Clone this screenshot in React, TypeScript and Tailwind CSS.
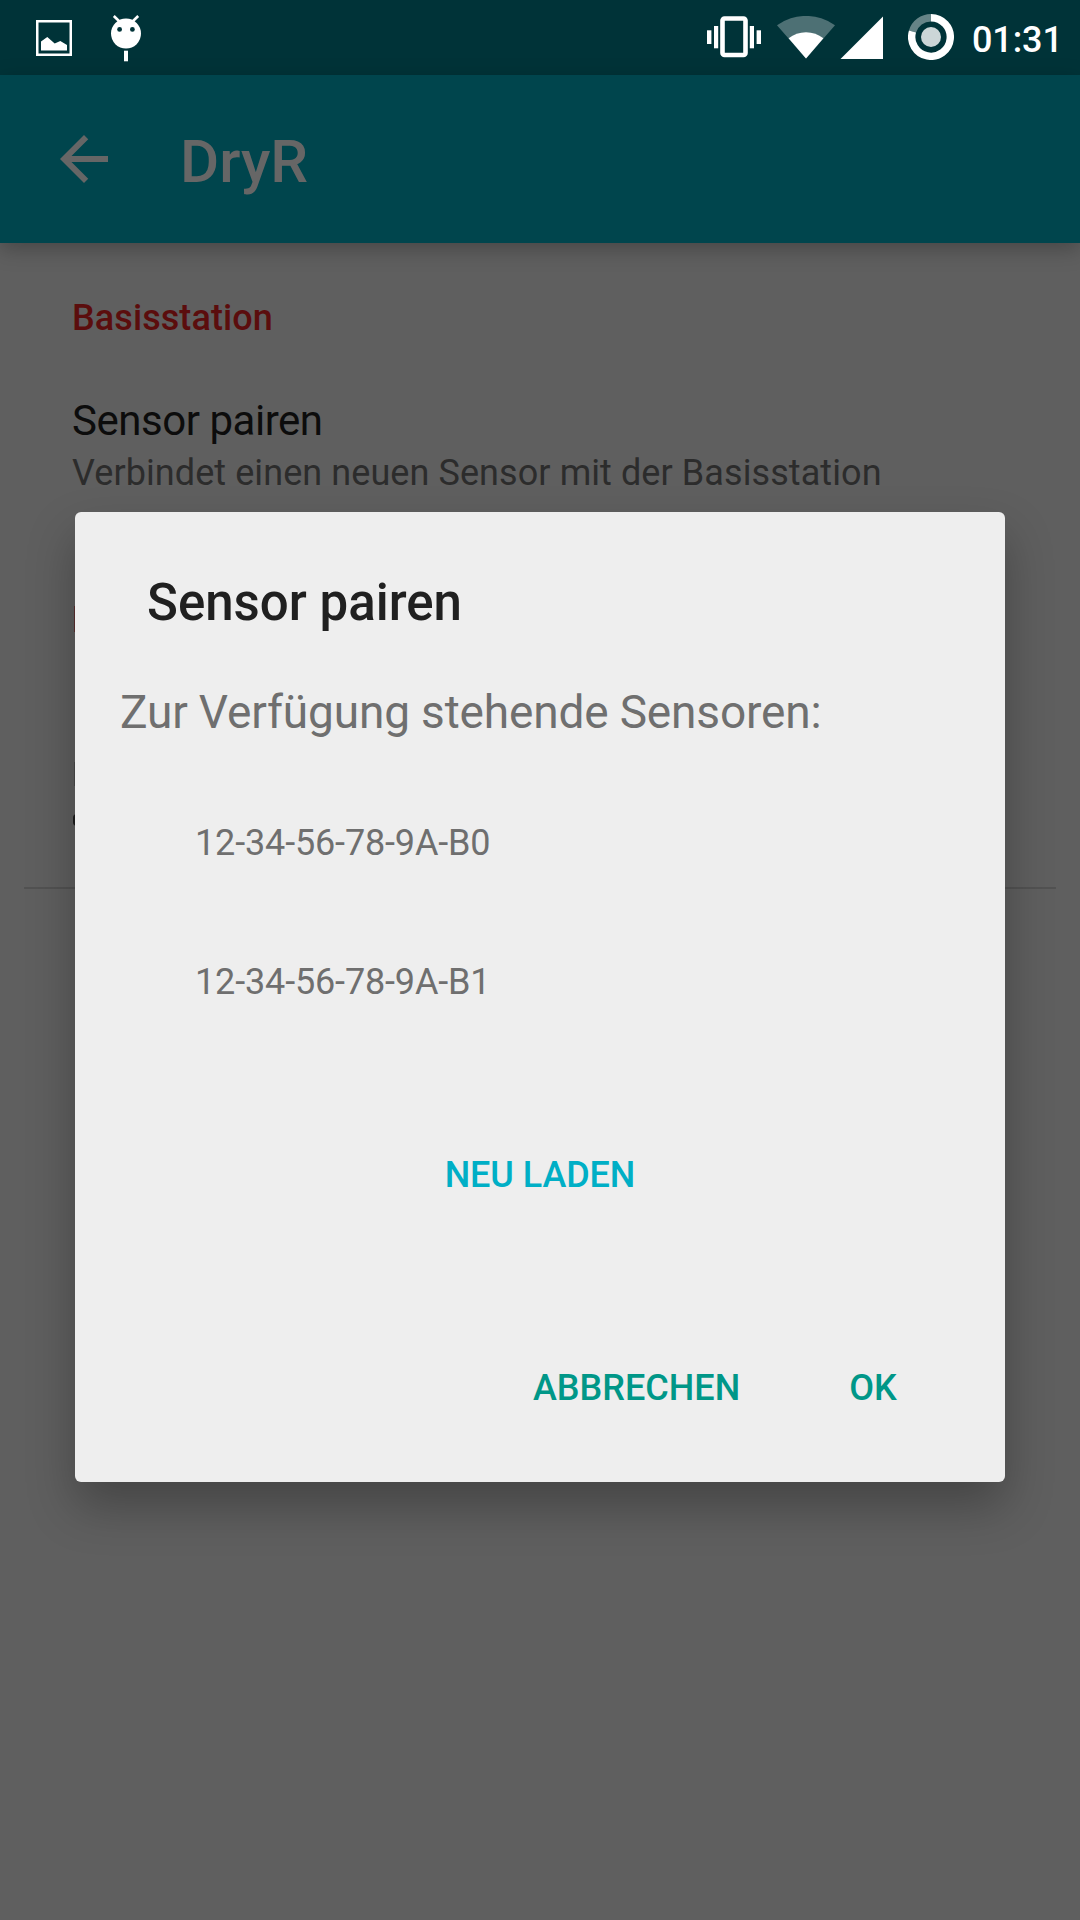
const sensors = ["12-34-56-78-9A-B0", "12-34-56-78-9A-B1"];

function StatusBar() {
  return (
    <div className="flex h-[75px] items-start bg-[#003338] text-white">
      <svg className="ml-9 mt-5 h-9 w-9 shrink-0" viewBox="0 0 36 36" fill="currentColor">
        <rect x="1.25" y="1.25" width="33.5" height="33.5" fill="none" stroke="currentColor" strokeWidth="2.5" />
        <path d="M5 30.5V21.5L11.3 17L18.7 23.5L24.3 21L31 25V30.5Z" />
      </svg>
      <svg className="ml-9 mt-3.5 h-12 w-9 shrink-0" viewBox="0 0 36 48">
        <path d="M5.8 2L13 9M30.2 2L23 9" stroke="currentColor" strokeWidth="2.6" />
        <circle cx="18" cy="19.6" r="15" fill="currentColor" />
        <circle cx="11.6" cy="15.4" r="2.4" fill="#003338" />
        <circle cx="24.4" cy="15.4" r="2.4" fill="#003338" />
        <rect x="16" y="36.7" width="4" height="10.6" fill="currentColor" />
      </svg>
      <svg className="ml-auto mt-4 h-[42px] w-[54px] shrink-0" viewBox="0 0 54 42" fill="currentColor">
        <rect x="15.5" y="2.5" width="23" height="36.5" rx="2" fill="none" stroke="currentColor" strokeWidth="4.6" />
        <rect x="0" y="14.3" width="4.4" height="13.7" />
        <rect x="7" y="10" width="4.2" height="22.3" />
        <rect x="42.8" y="10" width="4.2" height="22.3" />
        <rect x="49.6" y="14.3" width="4.4" height="13.7" />
      </svg>
      <svg className="ml-4 mt-4 h-[43px] w-[58px] shrink-0" viewBox="0 0 58 43" fill="currentColor">
        <path opacity="0.3" d="M0 9.3A49.5 49.5 0 0 1 58 9.3L29 42.6Z" />
        <path d="M11.6 22.3A28 28 0 0 1 46.4 22.3L29 42.6Z" />
      </svg>
      <svg className="ml-[5px] mt-4 h-[43px] w-[43px] shrink-0" viewBox="0 0 43 43" fill="currentColor">
        <path d="M0.5 43L43 0.5V43Z" />
      </svg>
      <svg className="ml-[25px] mt-3.5 h-[46px] w-[46px] shrink-0" viewBox="0 0 46 46" fill="none">
        <path d="M4.5 17.5A19.3 19.3 0 0 1 23 3.7" stroke="currentColor" strokeOpacity="0.4" strokeWidth="7.4" />
        <path d="M23 3.7A19.3 19.3 0 1 1 4.5 17.5" stroke="currentColor" strokeWidth="7.4" />
        <circle cx="23" cy="23" r="10" fill="currentColor" fillOpacity="0.8" />
      </svg>
      <span className="ml-[18px] mr-5 mt-[15px] w-[88px] whitespace-nowrap text-[36px] font-medium leading-[50px] tracking-[-0.1px]">01:31</span>
    </div>
  );
}

function Toolbar() {
  return (
    <div className="relative flex h-[168px] items-center bg-[#00454d] pl-12 text-[#666666] shadow-[0_6px_20px_rgba(0,0,0,0.26)]">
      <svg className="h-[72px] w-[72px]" viewBox="0 0 24 24" fill="currentColor">
        <path d="M20 11H7.83l5.59-5.59L12 4l-8 8 8 8 1.41-1.41L7.83 13H20v-2z" />
      </svg>
      <h1 className="ml-[60px] mt-1.5 text-[60px] font-medium leading-[72px]">DryR</h1>
    </div>
  );
}

function Settings() {
  return (
    <div className="flex flex-col pt-[50px]">
      <h2 className="ml-[72px] text-[36px] font-medium leading-[50px] tracking-[0.08px] text-[#5b0d0d]">Basisstation</h2>
      <div className="ml-[72px] mt-[53px] text-[42px] leading-[50px] tracking-[-0.47px] text-[#0c0c0c]">Sensor pairen</div>
      <div className="ml-[72px] mt-1.5 text-[36px] leading-[42px] tracking-[0.08px] text-[#2c2c2c]">
        Verbindet einen neuen Sensor mit der Basisstation
      </div>
      <div className="ml-[74px] mt-[112px] h-[26px] w-1 bg-[#5c3030]" />
      <div className="ml-[74px] mt-[130px] h-6 w-1 bg-[#4a4a4a]" />
      <div className="ml-[73px] mt-[28px] h-3 w-4 rounded-[4px] bg-[#1c1c1c]" />
      <div className="mx-6 mt-[61px] h-0.5 bg-[#525252]" />
    </div>
  );
}

function PairingDialog() {
  return (
    <div
      role="dialog"
      className="absolute left-[75px] top-[512px] flex h-[970px] w-[930px] flex-col rounded-[6px] bg-[#eeeeee] shadow-[0_24px_48px_rgba(0,0,0,0.28)]"
    >
      <h2 className="ml-[72px] mt-[61px] text-[51px] font-medium leading-[60px] text-[#202020]">Sensor pairen</h2>
      <p className="ml-[45px] mt-[49px] text-[46px] leading-[60px] tracking-[-0.16px] text-[#6f6f6f]">
        Zur Verfügung stehende Sensoren:
      </p>
      <ul className="mt-[31px] text-[36px] text-[#6f6f6f]">
        {sensors.map((id) => (
          <li key={id} className="flex h-[139px] items-center pl-[120px] leading-[50px] tracking-[-0.15px]">
            {id}
          </li>
        ))}
      </ul>
      <button className="mt-[99px] h-[50px] text-center text-[36px] font-medium leading-[50px] tracking-[-0.08px] text-[#00afc6]">
        NEU LADEN
      </button>
      <div className="mt-[163px] flex text-[36px] font-medium leading-[50px] text-[#009788]">
        <button className="ml-[458px]">ABBRECHEN</button>
        <button className="ml-[109px]">OK</button>
      </div>
    </div>
  );
}

export default function App() {
  return (
    <div className="relative h-[1920px] w-[1080px] overflow-hidden bg-[#5f5f5f] font-['Roboto',sans-serif]">
      <StatusBar />
      <Toolbar />
      <Settings />
      <PairingDialog />
    </div>
  );
}
